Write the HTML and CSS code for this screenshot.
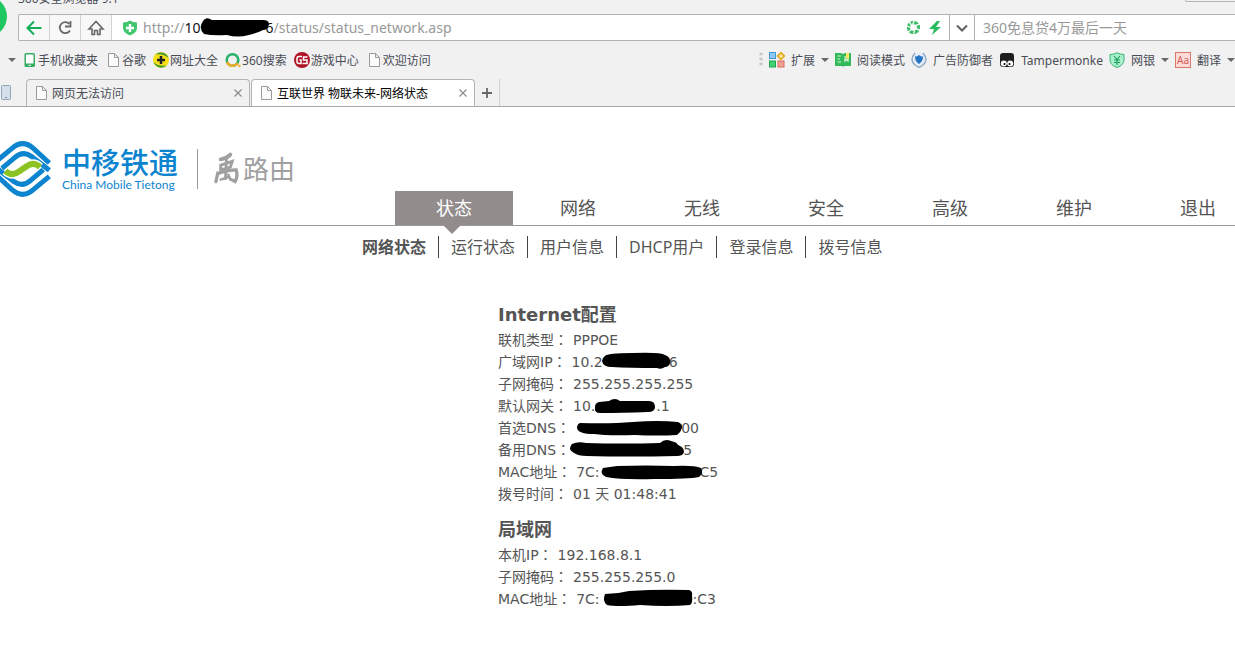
FILE: index.html
```html
<!DOCTYPE html>
<html lang="zh-CN">
<head>
<meta charset="utf-8">
<title>互联世界 物联未来-网络状态</title>
<link rel="stylesheet" href="styles.css">
</head>
<body>
<svg class="defs" width="0" height="0" aria-hidden="true">
  <symbol id="doc" viewBox="0 0 16 16"><path d="M3.500 1.500h6l4 4v9h-10z M9.500 1.500v4h4" fill="#fbfbfb" stroke="#9a9a9a"/></symbol>
  <symbol id="caret" viewBox="0 0 8 8"><path d="M0 2h8L4 6z" fill="#6a6a6a"/></symbol>
  <symbol id="close" viewBox="0 0 10 10"><path d="M1.500 1.500l7 7M8.500 1.500l-7 7" stroke="#8c8c8c" stroke-width="1.200"/></symbol>
</svg>

<div class="chrome">
  <div class="titlebar">
    <span class="orb"></span>
    <span class="title">360安全浏览器 9.1</span>
    <span class="window-controls"></span>
  </div>

  <div class="address">
    <button class="nav-btn" aria-label="后退"><svg width="20" height="20" viewBox="0 0 20 20"><path d="M17.500 10H4M10 3.500L3.500 10l6.500 6.500" fill="none" stroke="#0fae57" stroke-width="2"/></svg></button>
    <button class="nav-btn" aria-label="刷新"><svg width="20" height="20" viewBox="0 0 20 20"><path d="M14.500 6A5.500 5.500 0 1 0 15 12.500" fill="none" stroke="#686868" stroke-width="1.800"/><path d="M15.500 3v5.500H10" fill="none" stroke="#686868" stroke-width="1.800"/></svg></button>
    <button class="nav-btn" aria-label="主页"><svg width="20" height="20" viewBox="0 0 20 20"><path d="M3 11l7-7.500 7 7.500h-3v5.500h-2.500v-4h-3v4H6V11z" fill="none" stroke="#686868" stroke-width="1.600"/></svg></button>
    <div class="url">
      <svg width="16" height="16" viewBox="0 0 16 16"><path d="M1 2.500Q5 2.500 8 .500q3 2 7 2V8q0 5-7 7.500Q1 13 1 8z" fill="#41c66f"/><path d="M8 4v8M4 8h8" stroke="#fff" stroke-width="2.400"/></svg>
      <span class="url-text">http://<b>10</b><svg class="mark mark-url" viewBox="201 17 65 22"><path d="M203 22q3-5 9-1h51q6 0 6 4-1 6-6 6-6 3-14 5-12 3-22 0-14 1-23-1-6-6-1-13z"/></svg><b>6</b>/status/status_network.asp</span>
    </div>
    <div class="url-tools">
      <svg width="15" height="15" viewBox="0 0 16 16"><circle cx="8" cy="8" r="5.300" fill="none" stroke="#3fbd6d" stroke-width="3.600"/><path d="M9 0L7 5M15 4l-5 2M15 11l-5-2M8 16l1-5M2 13l4-3M0 6l5 2M3 1l3 5" stroke="#fff" stroke-width="1.300"/></svg>
      <svg width="14" height="16" viewBox="0 0 14 16"><path d="M9 1L1 9h5l-2 6 9-8H8l4-6z" fill="#28bb60"/></svg>
    </div>
    <button class="drop" aria-label="展开"><svg width="12" height="12" viewBox="0 0 12 12"><path d="M1 3.500l5 5 5-5" fill="none" stroke="#606060" stroke-width="2"/></svg></button>
    <input class="search" type="text" aria-label="搜索" placeholder="360免息贷4万最后一天">
  </div>

  <div class="bookmarks">
    <svg class="caret" width="8" height="8"><use href="#caret"/></svg>
    <a href="#"><svg width="16" height="16" viewBox="0 0 16 16"><rect x="3.500" y="1" width="10.500" height="14" rx="1.500" fill="#35ac62"/><path d="M5 2.500h7.500v9H5z" fill="#fff"/><path d="M7.500 13.300H10" stroke="#fff"/></svg>手机收藏夹</a>
    <a href="#"><svg width="16" height="16"><use href="#doc"/></svg>谷歌</a>
    <a href="#"><svg width="16" height="16" viewBox="0 0 16 16"><circle cx="8" cy="8" r="8" fill="#f5df19"/><path d="M2.500 2.500A8 8 0 0 1 15.500 6Q10 1 2.500 2.500M.500 10A8 8 0 0 0 13.500 13.500Q6 15 .500 10" fill="#3f9a3c"/><path d="M8 4v8M4 8h8" stroke="#222" stroke-width="2.500"/></svg>网址大全</a>
    <a href="#"><svg width="16" height="16" viewBox="0 0 16 16"><circle cx="7.500" cy="8" r="5.800" fill="none" stroke="#27b36b" stroke-width="2.600"/><path d="M2 10q2 4 6 3.800 3 0 5-2.500" fill="none" stroke="#f3ab25" stroke-width="2.600"/><circle cx="14.500" cy="14" r="1.200" fill="#f3ab25"/></svg>360搜索</a>
    <a href="#"><svg width="16" height="16" viewBox="0 0 16 16"><circle cx="8" cy="8" r="8" fill="#ae1426"/><path d="M8 4.500H5Q3 4.500 3 6.500v3q0 2 2 2h2V8H5.500M13.500 5H9.500v3h3.500v3.500H8.500" fill="none" stroke="#fff" stroke-width="1.500"/></svg>游戏中心</a>
    <a href="#"><svg width="16" height="16"><use href="#doc"/></svg>欢迎访问</a>
    <div class="extensions">
      <svg width="4" height="16" viewBox="0 0 4 16"><path d="M.500 2h3M.500 7h3M.500 12h3" stroke="#c6c6c6" stroke-width="2.500"/></svg>
      <a href="#"><svg width="16" height="16" viewBox="0 0 16 16"><rect x=".500" y=".500" width="6" height="6" fill="#8ec8f2" stroke="#3e97d8"/><rect x=".500" y="9" width="6" height="6" fill="#44d077" stroke="#1da751"/><rect x="9" y="9" width="6" height="6" fill="#f2a096" stroke="#dc6b5e"/><path d="M12 .500L15.500 4 12 7.500 8.500 4z" fill="#ffe18a" stroke="#dfa51f" stroke-width="1.500"/></svg>扩展</a>
      <svg class="caret" width="8" height="8"><use href="#caret"/></svg>
      <a href="#"><svg width="16" height="16" viewBox="0 0 16 16"><path d="M0 1h6l2 1 2-1h6v13H9l-1 1-1-1H0z" fill="#32b959"/><path d="M2.500 4H6M2.500 7H5M2.500 10H6M10 4v5l1.500-1.500L13 9V3" fill="none" stroke="#d9f6d8" stroke-width="1.200"/><path d="M11 1h3v6l-1.500-1L11 7z" fill="#ffe65c"/></svg>阅读模式</a>
      <a href="#"><svg width="16" height="16" viewBox="0 0 16 16"><path d="M4 1Q-2 8 4 13l4 2.500 4-2.500q6-5 0-12" fill="#e4edf5" stroke="#8fa9c3" stroke-width="1.400"/><path d="M4 4.500Q6.500 4.500 8 3q1.500 1.500 4 1.500 0 5-4 7.500-4-2.500-4-7.500" fill="#2575c5"/></svg>广告防御者</a>
      <a href="#"><svg width="16" height="16" viewBox="0 0 16 16"><rect x="1" y="1" width="14" height="14" rx="3" fill="#1d1d1d"/><circle cx="4.800" cy="11.500" r="3" fill="#fff"/><circle cx="11.200" cy="11.500" r="3" fill="#fff"/><circle cx="5.500" cy="12" r="1"/><circle cx="10.500" cy="12" r="1"/></svg>Tampermonke</a>
      <a href="#"><svg width="16" height="16" viewBox="0 0 16 16"><path d="M1 2.500Q5 2.500 8 .800q3 1.700 7 1.700V8q0 5-7 7.500Q1 13 1 8z" fill="#a9efcb" stroke="#35b575"/><path d="M5 4l3 3.500L11 4M8 7.500V13M5 8h6M5 10.500h6" fill="none" stroke="#189957" stroke-width="1.100"/></svg>网银</a>
      <svg class="caret" width="8" height="8"><use href="#caret"/></svg>
      <a href="#"><svg width="16" height="16" viewBox="0 0 16 16"><rect x=".500" y=".500" width="15" height="15" fill="#fbdad7" stroke="#d9776e"/><text x="8" y="12" text-anchor="middle" class="aa">Aa</text></svg>翻译</a>
      <svg class="caret" width="8" height="8"><use href="#caret"/></svg>
    </div>
  </div>

  <div class="tabs">
    <svg class="device" width="12" height="16" viewBox="0 0 12 16"><rect x="1.500" y=".500" width="9" height="14" rx="1" fill="#d5dfec" stroke="#94a5ba"/><path d="M5 12.500h2" stroke="#8095ae"/></svg>
    <button class="tab"><svg width="16" height="16"><use href="#doc"/></svg><span>网页无法访问</span><svg width="10" height="10"><use href="#close"/></svg></button>
    <button class="tab active"><svg width="16" height="16"><use href="#doc"/></svg><span>互联世界 物联未来-网络状态</span><svg width="10" height="10"><use href="#close"/></svg></button>
    <button class="new-tab" aria-label="新标签页"><svg width="10" height="10" viewBox="0 0 10 10"><path d="M5 0v10M0 5h10" stroke="#666" stroke-width="1.800"/></svg></button>
  </div>
</div>

<header class="header">
  <div class="brand">
    <svg class="emblem" width="52" height="56" viewBox="0 0 156 168">
      <g fill="none" stroke="#0c84cf" stroke-width="15">
        <g id="arches"><path d="M-12 62L36 22Q68-6 100 22L148 66"/><path d="M6 82L44 50Q68 28 94 46L148 88"/></g>
        <use href="#arches" transform="rotate(180 68 84)"/>
      </g>
      <path d="M16 90Q36 108 56 92L80 76Q100 60 120 78" fill="none" stroke="#fff" stroke-width="26"/>
      <path d="M16 90Q36 108 56 92L80 76Q100 60 120 78" fill="none" stroke="#8cc322" stroke-width="18"/>
    </svg>
    <div class="company"><strong>中移铁通</strong><small>China Mobile Tietong</small></div>
    <div class="product">
      <svg width="27" height="36" viewBox="0 0 28 36" fill="none" stroke="#a0a0a0" stroke-linecap="round"><path d="M18 3Q14 7 8 8" stroke-width="4"/><path d="M8 14l12-4-2 6-10 3zM14 6l-1 22" stroke-width="3"/><path d="M5 22L3 31M5 23q10-4 19-4 2 6-1 12l-4-2" stroke-width="3.400"/><path d="M8 29l9-3M16 24l2 5" stroke-width="2.600"/></svg>
      <span>路由</span>
    </div>
  </div>
  <nav class="menu">
    <a class="current" href="#">状态</a><a href="#">网络</a><a href="#">无线</a><a href="#">安全</a><a href="#">高级</a><a href="#">维护</a><a href="#">退出</a>
  </nav>
</header>

<nav class="submenu">
  <a class="current" href="#">网络状态</a><a href="#">运行状态</a><a href="#">用户信息</a><a href="#">DHCP用户</a><a href="#">登录信息</a><a href="#">拨号信息</a>
</nav>

<main class="content">
  <h2>Internet配置</h2>
  <dl>
    <div><dt>联机类型<i lang="zh-TW">：</i></dt><dd>PPPOE</dd></div>
    <div><dt>广域网IP<i lang="zh-TW">：</i></dt><dd>10.2<svg class="mark mark-wan" viewBox="603 351 66 22"><path d="M605 356q2-3 28-3 28-1 32 2 6 2 5 8-1 4-5 4-4 3-8 1-28 0-45-1-9 0-10-6 0-3 3-5z"/></svg>6</dd></div>
    <div><dt>子网掩码<i lang="zh-TW">：</i></dt><dd>255.255.255.255</dd></div>
    <div><dt>默认网关<i lang="zh-TW">：</i></dt><dd>10.<svg class="mark mark-gateway" viewBox="595 395 61 22"><path d="M599 402l10-1q6-4 11 0h29q6 0 6 6 0 5-7 5-26 1-48 1-6 0-5-6 0-4 4-5z"/></svg>.1</dd></div>
    <div><dt>首选DNS<i lang="zh-TW">：</i></dt><dd><svg class="mark mark-dns1" viewBox="575 417 106 22"><path d="M580 423q30 1 53-1 25-2 45 0 5 2 4 6-1 4-5 7-20 1-42 0-27 1-41-1-16 0-17-6 0-4 3-5z"/></svg>00</dd></div>
    <div><dt>备用DNS<i lang="zh-TW">：</i></dt><dd><svg class="mark mark-dns2" viewBox="575 439 108 22"><path d="M572 444q6-3 14-1 37 1 74 0 5-5 11-2 6 1 7 4 6 2 6 7-1 4-7 4-50 1-90 0-9 0-13-3-7-4-2-9z"/></svg>5</dd></div>
    <div><dt>MAC地址<i lang="zh-TW">：</i></dt><dd>7C:<svg class="mark mark-mac" viewBox="600 461 100 22"><path d="M603 468q7-1 14-2 30-1 57 0 20-1 27 2 3 5-2 9-10 2-45 2-32 1-48-2-7-3-3-9z"/></svg>C5</dd></div>
    <div><dt>拨号时间<i lang="zh-TW">：</i></dt><dd>01 天 01:48:41</dd></div>
  </dl>
  <h2>局域网</h2>
  <dl>
    <div><dt>本机IP<i lang="zh-TW">：</i></dt><dd>192.168.8.1</dd></div>
    <div><dt>子网掩码<i lang="zh-TW">：</i></dt><dd>255.255.255.0</dd></div>
    <div><dt>MAC地址<i lang="zh-TW">：</i></dt><dd>7C:<svg class="mark mark-lan" viewBox="600 588 93 22"><path d="M605 594q12 0 24-3 30-2 60-1 4 1 3 6 1 7-2 9-22 2-50 0-23 2-33 0-5-4-2-11z"/></svg>:C3</dd></div>
  </dl>
</main>
</body>
</html>
```

FILE: styles.css
```css
* { box-sizing: border-box; }

body {
  margin: 0;
  overflow-x: hidden;
  background: #fff;
  color: #555;
  font-family: "Noto Sans", "Noto Sans CJK SC", sans-serif;
}

a { color: inherit; text-decoration: none; }
button { padding: 0; border: 0; background: none; color: inherit; font: inherit; }
svg { flex: none; }
.defs { position: absolute; }

/* Browser frame */
.chrome {
  position: relative;
  overflow: hidden;
  border-bottom: 1px solid #a9a9a9;
  background: #f1f1f1;
  color: #4a4d57;
  font-size: 12px;
}
.titlebar { display: flex; height: 14px; padding-left: 18px; }
.title { margin-top: -11px; line-height: 20px; }
.orb {
  position: absolute;
  top: -4px;
  left: -34px;
  width: 41px;
  height: 41px;
  border-radius: 50%;
  background: #1fc763;
}
.window-controls {
  width: 50px;
  height: 2px;
  margin-left: auto;
  border: solid #b5b5b5;
  border-width: 0 0 1px 1px;
  border-radius: 0 0 0 4px;
}

.address {
  display: flex;
  height: 27px;
  margin-left: 18px;
  border: 1px solid #b2b2b2;
  border-right: 0;
  border-radius: 2px 0 0 2px;
  background: #fff;
  font-size: 14px;
}
.nav-btn, .drop {
  display: grid;
  place-items: center;
  width: 31px;
  border-right: 1px solid #d2d2d2;
  background: #f8f8f8;
}
.url { display: flex; flex: 1; align-items: center; gap: 5px; padding-left: 10px; }
.url-text { display: flex; color: #999; line-height: 24px; white-space: nowrap; }
.url-text b { color: #111; font-weight: 400; }
.url-tools { display: flex; align-items: center; gap: 7px; padding-right: 7px; }
.drop { width: 26px; border-left: 1px solid #b2b2b2; border-right-color: #b2b2b2; background: #fff; }
.search { width: 260px; padding: 0 8px; border: 0; outline: 0; background: none; font: inherit; }
.search::placeholder { color: #999; opacity: 1; }

.bookmarks { display: flex; align-items: center; gap: 7px; height: 38px; padding-left: 8px; white-space: nowrap; }
.bookmarks a { display: flex; align-items: center; gap: 1px; }
.bookmarks > .caret { margin-right: -2px; }
.extensions { display: flex; align-items: center; gap: 6px; margin-left: auto; }
.extensions a { gap: 6px; }
.aa { fill: #cf6259; font-family: "Noto Sans", sans-serif; font-size: 10px; }

.tabs { display: flex; align-items: stretch; height: 27px; }
.device { align-self: center; margin-right: 14px; }
.tab {
  display: flex;
  align-items: center;
  gap: 3px;
  width: 224px;
  padding: 0 6px;
  border: 1px solid #b4b4b4;
  border-bottom: 0;
  border-radius: 4px 4px 0 0;
  text-align: left;
}
.tab span { flex: 1; }
.tab.active { margin-left: 1px; background: #fff; color: #000; }
.new-tab { display: grid; place-items: center; width: 25px; border-right: 1px solid #cfcfcf; }

/* Router page */
.header { display: flex; align-items: flex-end; border-bottom: 1px solid #999; }
.brand { display: flex; flex: 0 0 395px; align-items: center; height: 84px; margin-bottom: 14px; }
.company { display: flex; flex-direction: column; width: 135px; margin-left: 10px; color: #0c84cf; white-space: nowrap; }
.company strong { font-size: 29px; font-weight: 500; line-height: 32px; }
.company small { font-family: Lato, sans-serif; font-size: 12px; line-height: 12px; }
.product {
  display: flex;
  align-items: center;
  gap: 3px;
  height: 40px;
  padding-left: 15px;
  border-left: 1px solid #999;
  color: #a0a0a0;
  font-size: 26px;
  line-height: 36px;
}
.menu { display: flex; gap: 6px; margin-top: 84px; font-size: 18px; line-height: 34px; text-align: center; }
.menu a { position: relative; flex: 0 0 118px; }
.menu .current { background: #928c8c; color: #fff; }
.menu .current::after {
  position: absolute;
  top: 100%;
  left: 48px;
  border: solid transparent;
  border-width: 9px 9px 0;
  border-top-color: #928c8c;
  content: "";
}

.submenu { display: flex; margin-top: 10px; padding-left: 350px; line-height: 22px; white-space: nowrap; }
.submenu a { padding: 0 12px; }
.submenu a + a { border-left: 1px solid #444; }
.submenu .current { font-weight: 700; }

.content {
  padding: 42px 0 40px 498px;
  font-family: "DejaVu Sans", "Noto Sans CJK SC", sans-serif;
  font-size: 14px;
  line-height: 22px;
}
h2 { margin: 0; font-size: 18px; line-height: 29px; }
dl { margin: 0 0 10px; }
dl > div { display: flex; gap: 5px; white-space: nowrap; }
dt i { font-family: "Noto Sans CJK TC", sans-serif; font-style: normal; line-height: 1; }
dd { display: flex; margin: 0; white-space: pre; }

/* Scribbled-out digits */
.mark { position: relative; overflow: visible; height: 22px; fill: #000; }
.mark-url { width: 65px; }
.mark-wan { width: 66px; }
.mark-gateway { width: 61px; }
.mark-dns1 { width: 106px; }
.mark-dns2 { width: 108px; }
.mark-mac { width: 100px; }
.mark-lan { width: 93px; }
```
